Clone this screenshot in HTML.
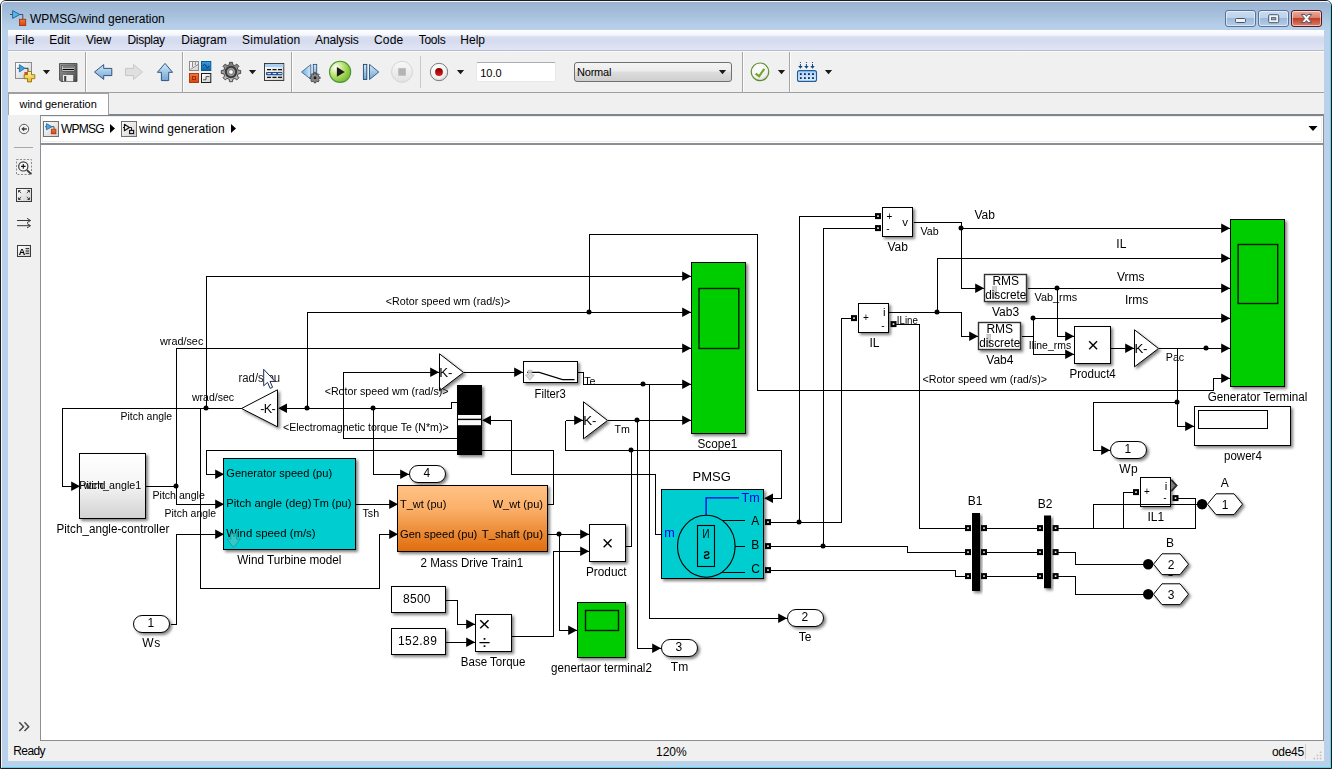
<!DOCTYPE html>
<html><head><meta charset="utf-8"><title>WPMSG/wind generation</title>
<style>
html,body{margin:0;padding:0}
body{width:1332px;height:769px;position:relative;overflow:hidden;background:#fff;font-family:"Liberation Sans",sans-serif;font-size:12px;color:#000}
.abs{position:absolute}
#frame{left:0;top:0;width:1330px;height:767px;border:1px solid #1c1c1c;border-radius:6px 6px 0 0;background:#b9d1ea;overflow:hidden}
#frame2{left:1px;top:1px;width:1328px;height:765px;border:1px solid;border-color:#f4f8fc #5ad4ec #5ad4ec #f4f8fc;border-radius:5px 5px 0 0}
#titlegrad{left:0;top:0;width:1332px;height:30px;background:linear-gradient(#98b2d0 0px,#a4bedb 12px,#b4cde8 24px,#b9d1ea 30px)}
#title{left:30px;top:10.5px;font-size:12px;line-height:16px;white-space:pre}
#menubar{left:8px;top:30px;width:1316px;height:21px;background:linear-gradient(#ffffff 0px,#f4f6fb 5px,#d9dff0 7px,#d5dbee 11px,#e1e6f6 20px);border-bottom:1px solid #b6bccc;box-sizing:border-box}
.mi{position:absolute;top:32px;line-height:16px;white-space:pre;font-size:12px}
#toolbar{left:8px;top:51px;width:1316px;height:42px;background:#f0f0f0;border-bottom:1px solid #a0a0a0;border-top:1px solid #fbfbfb;box-sizing:border-box}
.sep{position:absolute;width:1px;background:#a5a5a5;box-shadow:1px 0 0 #fdfdfd}
#tabrow{left:8px;top:93px;width:1316px;height:21px;background:#f0f0f0}
#tab{left:8px;top:93px;width:101px;height:22px;background:#fff;border:1px solid #a0a0a0;border-bottom:none;box-sizing:border-box}
#tabtxt{left:19.5px;top:97px;font-size:11px;line-height:14px;white-space:pre;letter-spacing:-0.03px}
#palette{left:8px;top:114px;width:33px;height:627px;background:#f0f0f0}
#bcbar{left:40px;top:114px;width:1284px;height:31px;background:#fff;border:1px solid #8a8e96;border-top:2px solid #7f838a;border-bottom:2px solid #8a8e96;box-sizing:border-box}
#canvas{left:40px;top:145px;width:1284px;height:596px;background:#fff;border-left:1px solid #8a8e96;border-right:1px solid #8a8e96;border-bottom:1px solid #8a8e96;box-sizing:border-box}
#status{left:8px;top:741px;width:1316px;height:20px;background:#f0f0f0}
.st{position:absolute;top:744.6px;line-height:14px;font-size:12px;white-space:pre}
svg{position:absolute;left:0;top:0}
svg text{font-family:"Liberation Sans",sans-serif;white-space:pre}
</style></head>
<body>
<div id="frame" class="abs"><div id="titlegrad" class="abs"></div></div><div id="frame2" class="abs"></div>
<div id="title" class="abs">WPMSG/wind generation</div>
<div id="menubar" class="abs"></div>
<div class="mi" style="left:15px;letter-spacing:0px">File</div>
<div class="mi" style="left:49.3px;letter-spacing:0px">Edit</div>
<div class="mi" style="left:86px;letter-spacing:-0.2px">View</div>
<div class="mi" style="left:127.5px;letter-spacing:-0.3px">Display</div>
<div class="mi" style="left:181.3px;letter-spacing:0px">Diagram</div>
<div class="mi" style="left:242px;letter-spacing:0.25px">Simulation</div>
<div class="mi" style="left:315px;letter-spacing:-0.12px">Analysis</div>
<div class="mi" style="left:374px;letter-spacing:0.2px">Code</div>
<div class="mi" style="left:418.7px;letter-spacing:-0.25px">Tools</div>
<div class="mi" style="left:460.3px;letter-spacing:0px">Help</div>
<div id="toolbar" class="abs"></div>
<div class="sep" style="left:85px;top:52px;height:40px"></div>
<div class="sep" style="left:182px;top:52px;height:40px"></div>
<div class="sep" style="left:291px;top:52px;height:40px"></div>
<div class="sep" style="left:742px;top:52px;height:40px"></div>
<div class="sep" style="left:789px;top:52px;height:40px"></div>
<div class="sep" style="left:420px;top:56px;height:32px;box-shadow:none;background:#c8c8c8"></div>
<div id="tabrow" class="abs"></div>
<div id="palette" class="abs"></div>
<div id="bcbar" class="abs"></div><div class="abs" style="left:42px;top:116px;width:1280px;height:26px;border:1px solid #ececec;box-sizing:border-box"></div>
<div id="canvas" class="abs"></div>
<div id="tab" class="abs"></div><div id="tabtxt" class="abs">wind generation</div>
<div id="status" class="abs"></div>
<div class="st" style="left:13.3px;top:743.6px;letter-spacing:-0.6px">Ready</div>
<div class="st" style="left:656px">120%</div>
<div class="st" style="left:1272px;letter-spacing:-0.3px">ode45</div>
<div class="abs" style="left:1305px;top:744px;width:1px;height:15px;background:#d0d0d0"></div>
<div class="abs" style="left:476px;top:62px;width:80px;height:20px;box-sizing:border-box;border:1px solid #e3e9ef;border-top-color:#abadb3;border-radius:2px;background:#fff"></div>
<div class="abs" style="left:480.2px;top:65.5px;font-size:11px;line-height:14px">10.0</div>
<div class="abs" style="left:574px;top:62px;width:158px;height:20px;box-sizing:border-box;border:1px solid #707070;border-radius:3px;background:linear-gradient(#f4f4f4 0,#ececec 45%,#dddddd 50%,#cfcfcf 100%)"></div>
<div class="abs" style="left:577px;top:64.8px;font-size:11px;line-height:14px;letter-spacing:-0.2px">Normal</div>
<div class="abs" style="left:43px;top:121px;"></div>
<div class="abs" style="left:61px;top:121.4px;font-size:12px;line-height:16px;white-space:pre;letter-spacing:-0.75px">WPMSG</div>
<div class="abs" style="left:139px;top:121.4px;font-size:12px;line-height:16px;white-space:pre;letter-spacing:0.07px">wind generation</div>
<svg width="1332" height="769" viewBox="0 0 1332 769" style="will-change:transform">
<defs><filter id="sh" x="-20%" y="-20%" width="150%" height="150%"><feGaussianBlur in="SourceAlpha" stdDeviation="1.5"/><feOffset dx="2" dy="2"/><feComponentTransfer><feFuncA type="linear" slope="0.5"/></feComponentTransfer><feMerge><feMergeNode/><feMergeNode in="SourceGraphic"/></feMerge></filter><linearGradient id="gGrey" x1="0" y1="0" x2="0" y2="1"><stop offset="0" stop-color="#ffffff"/><stop offset="0.45" stop-color="#f6f6f6"/><stop offset="1" stop-color="#d2d2d2"/></linearGradient><linearGradient id="gOr" x1="0" y1="0" x2="0" y2="1"><stop offset="0" stop-color="#ffc285"/><stop offset="0.35" stop-color="#fbb06a"/><stop offset="1" stop-color="#df6c0c"/></linearGradient></defs>
<path d="M241.5,408.5 L62.5,408.5 L62.5,486.5 L80.5,486.5" fill="none" stroke="#000" stroke-width="1" shape-rendering="crispEdges"/>
<path d="M80.1,486.2 L71.19999999999999,481.5 L71.19999999999999,490.9Z" fill="#000"/>
<path d="M206.5,408.5 L206.5,276.5 L691.5,276.5" fill="none" stroke="#000" stroke-width="1" shape-rendering="crispEdges"/>
<path d="M691.1,276.2 L682.2,271.5 L682.2,280.9Z" fill="#000"/>
<path d="M200.5,408.5 L200.5,588.5 L379.5,588.5 L379.5,534.5 L398.5,534.5" fill="none" stroke="#000" stroke-width="1" shape-rendering="crispEdges"/>
<path d="M398.1,534.2 L389.20000000000005,529.5 L389.20000000000005,538.9000000000001Z" fill="#000"/>
<path d="M547.5,504.5 L553.5,504.5 L553.5,450.5 L206.5,450.5 L206.5,474.5 L224.5,474.5" fill="none" stroke="#000" stroke-width="1" shape-rendering="crispEdges"/>
<path d="M224.1,474.2 L215.2,469.5 L215.2,478.9Z" fill="#000"/>
<path d="M145.5,486.5 L176.5,486.5" fill="none" stroke="#000" stroke-width="1" shape-rendering="crispEdges"/>
<path d="M176.5,486.5 L176.5,348.5 L691.5,348.5" fill="none" stroke="#000" stroke-width="1" shape-rendering="crispEdges"/>
<path d="M691.1,348.2 L682.2,343.5 L682.2,352.9Z" fill="#000"/>
<path d="M176.5,486.5 L176.5,504.5 L224.5,504.5" fill="none" stroke="#000" stroke-width="1" shape-rendering="crispEdges"/>
<path d="M224.1,504.2 L215.2,499.5 L215.2,508.9Z" fill="#000"/>
<path d="M170.5,624.5 L176.5,624.5 L176.5,534.5 L224.5,534.5" fill="none" stroke="#000" stroke-width="1" shape-rendering="crispEdges"/>
<path d="M224.1,534.2 L215.2,529.5 L215.2,538.9000000000001Z" fill="#000"/>
<path d="M355.5,504.5 L398.5,504.5" fill="none" stroke="#000" stroke-width="1" shape-rendering="crispEdges"/>
<path d="M398.1,504.2 L389.20000000000005,499.5 L389.20000000000005,508.9Z" fill="#000"/>
<path d="M457.5,402.5 L451.5,402.5 L451.5,408.5 L278.5,408.5" fill="none" stroke="#000" stroke-width="1" shape-rendering="crispEdges"/>
<path d="M278.1,408.2 L287.0,403.5 L287.0,412.9Z" fill="#000"/>
<path d="M307.5,408.5 L307.5,312.5 L691.5,312.5" fill="none" stroke="#000" stroke-width="1" shape-rendering="crispEdges"/>
<path d="M691.1,312.2 L682.2,307.5 L682.2,316.9Z" fill="#000"/>
<path d="M589.5,312.5 L589.5,234.5 L757.5,234.5 L757.5,390.5 L1213.5,390.5 L1213.5,378.5 L1230.5,378.5" fill="none" stroke="#000" stroke-width="1" shape-rendering="crispEdges"/>
<path d="M1230.1,378.2 L1221.1999999999998,373.5 L1221.1999999999998,382.9Z" fill="#000"/>
<path d="M373.5,408.5 L373.5,474.5 L409.5,474.5" fill="none" stroke="#000" stroke-width="1" shape-rendering="crispEdges"/>
<path d="M409.1,474.2 L400.20000000000005,469.5 L400.20000000000005,478.9Z" fill="#000"/>
<path d="M457.5,438.5 L343.5,438.5 L343.5,372.5 L439.5,372.5" fill="none" stroke="#000" stroke-width="1" shape-rendering="crispEdges"/>
<path d="M439.1,372.2 L430.20000000000005,367.5 L430.20000000000005,376.9Z" fill="#000"/>
<path d="M463.5,372.5 L523.5,372.5" fill="none" stroke="#000" stroke-width="1" shape-rendering="crispEdges"/>
<path d="M523.1,372.2 L514.2,367.5 L514.2,376.9Z" fill="#000"/>
<path d="M577.5,372.5 L583.5,372.5 L583.5,384.5 L691.5,384.5" fill="none" stroke="#000" stroke-width="1" shape-rendering="crispEdges"/>
<path d="M691.1,384.2 L682.2,379.5 L682.2,388.9Z" fill="#000"/>
<path d="M649.5,384.5 L649.5,618.5 L787.5,618.5" fill="none" stroke="#000" stroke-width="1" shape-rendering="crispEdges"/>
<path d="M787.1,618.2 L778.2,613.5 L778.2,622.9000000000001Z" fill="#000"/>
<path d="M661.5,534.5 L655.5,534.5 L655.5,474.5 L511.5,474.5 L511.5,420.5 L482.5,420.5" fill="none" stroke="#000" stroke-width="1" shape-rendering="crispEdges"/>
<path d="M482.1,420.2 L491.0,415.5 L491.0,424.9Z" fill="#000"/>
<path d="M625.5,546.5 L631.5,546.5 L631.5,450.5" fill="none" stroke="#000" stroke-width="1" shape-rendering="crispEdges"/>
<path d="M565.5,420.5 L565.5,450.5 L781.5,450.5 L781.5,498.5 L764.5,498.5" fill="none" stroke="#000" stroke-width="1" shape-rendering="crispEdges"/>
<path d="M764.1,498.2 L773.0,493.5 L773.0,502.9Z" fill="#000"/>
<path d="M565.5,420.5 L583.5,420.5" fill="none" stroke="#000" stroke-width="1" shape-rendering="crispEdges"/>
<path d="M583.1,420.2 L574.2,415.5 L574.2,424.9Z" fill="#000"/>
<path d="M607.5,420.5 L691.5,420.5" fill="none" stroke="#000" stroke-width="1" shape-rendering="crispEdges"/>
<path d="M691.1,420.2 L682.2,415.5 L682.2,424.9Z" fill="#000"/>
<path d="M637.5,420.5 L637.5,648.5 L661.5,648.5" fill="none" stroke="#000" stroke-width="1" shape-rendering="crispEdges"/>
<path d="M661.1,648.2 L652.2,643.5 L652.2,652.9000000000001Z" fill="#000"/>
<path d="M547.5,534.5 L589.5,534.5" fill="none" stroke="#000" stroke-width="1" shape-rendering="crispEdges"/>
<path d="M589.1,534.2 L580.2,529.5 L580.2,538.9000000000001Z" fill="#000"/>
<path d="M559.5,534.5 L559.5,630.5 L577.5,630.5" fill="none" stroke="#000" stroke-width="1" shape-rendering="crispEdges"/>
<path d="M577.1,630.2 L568.2,625.5 L568.2,634.9000000000001Z" fill="#000"/>
<path d="M511.5,636.5 L553.5,636.5 L553.5,551.5 L589.5,551.5" fill="none" stroke="#000" stroke-width="1" shape-rendering="crispEdges"/>
<path d="M589.1,551.2 L580.2,546.5 L580.2,555.9000000000001Z" fill="#000"/>
<path d="M445.5,600.5 L457.5,600.5 L457.5,624.5 L475.5,624.5" fill="none" stroke="#000" stroke-width="1" shape-rendering="crispEdges"/>
<path d="M475.1,624.2 L466.20000000000005,619.5 L466.20000000000005,628.9000000000001Z" fill="#000"/>
<path d="M445.5,642.5 L475.5,642.5" fill="none" stroke="#000" stroke-width="1" shape-rendering="crispEdges"/>
<path d="M475.1,642.2 L466.20000000000005,637.5 L466.20000000000005,646.9000000000001Z" fill="#000"/>
<path d="M769.5,522.5 L841.5,522.5 L841.5,318.5 L851.5,318.5" fill="none" stroke="#000" stroke-width="1" shape-rendering="crispEdges"/>
<path d="M799.5,522.5 L799.5,216.5 L876.5,216.5" fill="none" stroke="#000" stroke-width="1" shape-rendering="crispEdges"/>
<path d="M769.5,546.5 L907.5,546.5 L907.5,552.5 L965.5,552.5" fill="none" stroke="#000" stroke-width="1" shape-rendering="crispEdges"/>
<path d="M823.5,546.5 L823.5,228.5 L876.5,228.5" fill="none" stroke="#000" stroke-width="1" shape-rendering="crispEdges"/>
<path d="M769.5,570.5 L955.5,570.5 L955.5,576.5 L965.5,576.5" fill="none" stroke="#000" stroke-width="1" shape-rendering="crispEdges"/>
<path d="M895.5,324.5 L919.5,324.5 L919.5,528.5 L965.5,528.5" fill="none" stroke="#000" stroke-width="1" shape-rendering="crispEdges"/>
<path d="M888.5,312.5 L961.5,312.5 L961.5,336.5 L978.5,336.5" fill="none" stroke="#000" stroke-width="1" shape-rendering="crispEdges"/>
<path d="M978.1,336.2 L969.2,331.5 L969.2,340.9Z" fill="#000"/>
<path d="M937.5,312.5 L937.5,258.5 L1230.5,258.5" fill="none" stroke="#000" stroke-width="1" shape-rendering="crispEdges"/>
<path d="M1230.1,258.2 L1221.1999999999998,253.5 L1221.1999999999998,262.9Z" fill="#000"/>
<path d="M913.5,222.5 L961.5,222.5 L961.5,288.5 L984.5,288.5" fill="none" stroke="#000" stroke-width="1" shape-rendering="crispEdges"/>
<path d="M984.1,288.2 L975.2,283.5 L975.2,292.9Z" fill="#000"/>
<path d="M961.5,228.5 L1230.5,228.5" fill="none" stroke="#000" stroke-width="1" shape-rendering="crispEdges"/>
<path d="M1230.1,228.2 L1221.1999999999998,223.5 L1221.1999999999998,232.89999999999998Z" fill="#000"/>
<path d="M1027.5,288.5 L1230.5,288.5" fill="none" stroke="#000" stroke-width="1" shape-rendering="crispEdges"/>
<path d="M1230.1,288.2 L1221.1999999999998,283.5 L1221.1999999999998,292.9Z" fill="#000"/>
<path d="M1057.5,288.5 L1057.5,336.5 L1074.5,336.5" fill="none" stroke="#000" stroke-width="1" shape-rendering="crispEdges"/>
<path d="M1074.1,336.2 L1065.1999999999998,331.5 L1065.1999999999998,340.9Z" fill="#000"/>
<path d="M1021.5,336.5 L1033.5,336.5" fill="none" stroke="#000" stroke-width="1" shape-rendering="crispEdges"/>
<path d="M1033.5,354.5 L1033.5,318.5 L1230.5,318.5" fill="none" stroke="#000" stroke-width="1" shape-rendering="crispEdges"/>
<path d="M1230.1,318.2 L1221.1999999999998,313.5 L1221.1999999999998,322.9Z" fill="#000"/>
<path d="M1033.5,336.5 L1033.5,354.5 L1074.5,354.5" fill="none" stroke="#000" stroke-width="1" shape-rendering="crispEdges"/>
<path d="M1074.1,354.2 L1065.1999999999998,349.5 L1065.1999999999998,358.9Z" fill="#000"/>
<path d="M1110.5,348.5 L1134.5,348.5" fill="none" stroke="#000" stroke-width="1" shape-rendering="crispEdges"/>
<path d="M1134.1,348.2 L1125.1999999999998,343.5 L1125.1999999999998,352.9Z" fill="#000"/>
<path d="M1158.5,348.5 L1230.5,348.5" fill="none" stroke="#000" stroke-width="1" shape-rendering="crispEdges"/>
<path d="M1230.1,348.2 L1221.1999999999998,343.5 L1221.1999999999998,352.9Z" fill="#000"/>
<path d="M1177.5,348.5 L1177.5,426.5 L1194.5,426.5" fill="none" stroke="#000" stroke-width="1" shape-rendering="crispEdges"/>
<path d="M1194.1,426.2 L1185.1999999999998,421.5 L1185.1999999999998,430.9Z" fill="#000"/>
<path d="M1177.5,402.5 L1093.5,402.5 L1093.5,450.5 L1110.5,450.5" fill="none" stroke="#000" stroke-width="1" shape-rendering="crispEdges"/>
<path d="M1110.1,450.2 L1101.1999999999998,445.5 L1101.1999999999998,454.9Z" fill="#000"/>
<path d="M985.5,528.5 L1037.5,528.5" fill="none" stroke="#000" stroke-width="1" shape-rendering="crispEdges"/>
<path d="M985.5,552.5 L1037.5,552.5" fill="none" stroke="#000" stroke-width="1" shape-rendering="crispEdges"/>
<path d="M985.5,576.5 L1037.5,576.5" fill="none" stroke="#000" stroke-width="1" shape-rendering="crispEdges"/>
<path d="M1057.5,528.5 L1195.5,528.5 L1195.5,498.5 L1177.5,498.5" fill="none" stroke="#000" stroke-width="1" shape-rendering="crispEdges"/>
<path d="M1123.5,528.5 L1123.5,492.5 L1133.5,492.5" fill="none" stroke="#000" stroke-width="1" shape-rendering="crispEdges"/>
<path d="M1093.5,528.5 L1093.5,504.5 L1197.5,504.5" fill="none" stroke="#000" stroke-width="1" shape-rendering="crispEdges"/>
<path d="M1057.5,552.5 L1075.5,552.5 L1075.5,564.5 L1148.5,564.5" fill="none" stroke="#000" stroke-width="1" shape-rendering="crispEdges"/>
<path d="M1057.5,576.5 L1075.5,576.5 L1075.5,594.5 L1148.5,594.5" fill="none" stroke="#000" stroke-width="1" shape-rendering="crispEdges"/>
<circle cx="206" cy="408.1" r="2.5" fill="#000"/>
<circle cx="307" cy="408.1" r="2.5" fill="#000"/>
<circle cx="373" cy="408.1" r="2.5" fill="#000"/>
<circle cx="176" cy="486.1" r="2.5" fill="#000"/>
<circle cx="589" cy="312.1" r="2.5" fill="#000"/>
<circle cx="643" cy="384.1" r="2.5" fill="#000"/>
<circle cx="637" cy="420.1" r="2.5" fill="#000"/>
<circle cx="631" cy="450.1" r="2.5" fill="#000"/>
<circle cx="559" cy="534.1" r="2.5" fill="#000"/>
<circle cx="799" cy="522.1" r="2.5" fill="#000"/>
<circle cx="823" cy="546.1" r="2.5" fill="#000"/>
<circle cx="937" cy="312.1" r="2.5" fill="#000"/>
<circle cx="961" cy="228.1" r="2.5" fill="#000"/>
<circle cx="1057" cy="288.1" r="2.5" fill="#000"/>
<circle cx="1033" cy="318.1" r="2.5" fill="#000"/>
<circle cx="1206" cy="348.1" r="2.5" fill="#000"/>
<circle cx="1177" cy="402.1" r="2.5" fill="#000"/>
<rect x="79.5" y="453.5" width="66" height="65" fill="url(#gGrey)" stroke="#000" stroke-width="1" filter="url(#sh)"/>
<rect x="223.5" y="458.5" width="132" height="91" fill="#00cdcf" stroke="#000" stroke-width="1" filter="url(#sh)"/>
<path d="M277.5,389.8 L241.5,408.5 L277.5,426.8Z" fill="#fff" stroke="#000" stroke-width="1" filter="url(#sh)"/>
<rect x="457.5" y="385.5" width="24" height="69" fill="#000" stroke="#000" stroke-width="1" filter="url(#sh)"/>
<rect x="458" y="415" width="23" height="10.2" fill="#fafafa"/><rect x="458" y="418.7" width="23" height="1.4" fill="#000"/>
<rect x="409.5" y="465.5" width="36" height="17" rx="8.5" ry="8.5" fill="#fff" stroke="#000" stroke-width="1" filter="url(#sh)"/>
<text x="426.8" y="477.1" font-size="12" text-anchor="middle" fill="#000">4</text>
<rect x="397.5" y="485.5" width="150" height="66" fill="url(#gOr)" stroke="#000" stroke-width="1" filter="url(#sh)"/>
<path d="M439.5,353.8 L463.5,372.5 L439.5,390.8Z" fill="#fff" stroke="#000" stroke-width="1" filter="url(#sh)"/>
<rect x="523.5" y="361.5" width="54" height="21" fill="#fff" stroke="#000" stroke-width="1" filter="url(#sh)"/>
<path d="M527,372.4 H539.3 L562.5,379.6 H574.5" fill="none" stroke="#000" stroke-width="1.1"/>
<path d="M528,370.3 h3.8 v4.6 h2.5 l-4.4,5.4 l-4.4,-5.4 h2.5z" fill="#d2d2d2" fill-opacity="0.85" stroke="#b0b0b0" stroke-width="0.7"/>
<path d="M583.5,401.8 L607.5,420.5 L583.5,438.8Z" fill="#fff" stroke="#000" stroke-width="1" filter="url(#sh)"/>
<rect x="691.5" y="262.5" width="54" height="171" fill="#00cd00" stroke="#000" stroke-width="1" filter="url(#sh)"/>
<rect x="699.0" y="288.5" width="39.799999999999955" height="60" fill="none" stroke="#001800" stroke-width="1.4"/>
<rect x="589.5" y="524.5" width="36" height="37" fill="#fff" stroke="#000" stroke-width="1" filter="url(#sh)"/>
<rect x="391.5" y="586.5" width="54" height="26" fill="#fff" stroke="#000" stroke-width="1" filter="url(#sh)"/>
<rect x="391.5" y="628.5" width="54" height="26" fill="#fff" stroke="#000" stroke-width="1" filter="url(#sh)"/>
<rect x="475.5" y="614.5" width="36" height="37" fill="#fff" stroke="#000" stroke-width="1" filter="url(#sh)"/>
<rect x="577.5" y="602.5" width="48" height="55" fill="#00cd00" stroke="#000" stroke-width="1" filter="url(#sh)"/>
<rect x="585.5" y="610.5" width="33" height="20" fill="none" stroke="#001800" stroke-width="1.4"/>
<rect x="661.5" y="639.5" width="36" height="17" rx="8.5" ry="8.5" fill="#fff" stroke="#000" stroke-width="1" filter="url(#sh)"/>
<text x="678.8" y="651.1" font-size="12" text-anchor="middle" fill="#000">3</text>
<rect x="787.5" y="609.5" width="36" height="17" rx="8.5" ry="8.5" fill="#fff" stroke="#000" stroke-width="1" filter="url(#sh)"/>
<text x="804.8" y="621.1" font-size="12" text-anchor="middle" fill="#000">2</text>
<rect x="133.5" y="615.5" width="36" height="17" rx="8.5" ry="8.5" fill="#fff" stroke="#000" stroke-width="1" filter="url(#sh)"/>
<text x="150.8" y="627.1" font-size="12" text-anchor="middle" fill="#000">1</text>
<rect x="1110.5" y="441.5" width="36" height="17" rx="8.5" ry="8.5" fill="#fff" stroke="#000" stroke-width="1" filter="url(#sh)"/>
<text x="1127.8" y="453.1" font-size="12" text-anchor="middle" fill="#000">1</text>
<rect x="661.5" y="489.5" width="102" height="89" fill="#00cdcf" stroke="#000" stroke-width="1" filter="url(#sh)"/>
<path d="M706.1,515 V497.9 H739" fill="none" stroke="#0000e0" stroke-width="1.3"/>
<ellipse cx="706.3" cy="546.2" rx="28.8" ry="31" fill="none" stroke="#000" stroke-width="1.1"/>
<rect x="697.5" y="525.5" width="17" height="41" fill="none" stroke="#000" stroke-width="1.1"/>
<path d="M722.5,520.5 H745 M735,546.5 H745 M722.5,572.5 H745" fill="none" stroke="#000" stroke-width="1.1"/>
<text transform="translate(709.4,538) scale(-0.78,1)" font-size="12.6" fill="#000">N</text>
<text transform="translate(710,559.4) scale(-0.9,1)" font-size="11" font-weight="bold" fill="#000">S</text>
<rect x="765" y="519.1" width="6" height="6" fill="#000"/><rect x="767.2" y="521.3" width="1.6" height="1.6" fill="#fff"/>
<rect x="765" y="543.1" width="6" height="6" fill="#000"/><rect x="767.2" y="545.3" width="1.6" height="1.6" fill="#fff"/>
<rect x="765" y="567.1" width="6" height="6" fill="#000"/><rect x="767.2" y="569.3" width="1.6" height="1.6" fill="#fff"/>
<rect x="882.5" y="207.5" width="30" height="29" fill="#fff" stroke="#000" stroke-width="1" filter="url(#sh)"/>
<rect x="875" y="213.1" width="6" height="6" fill="#000"/><rect x="877.2" y="215.3" width="1.6" height="1.6" fill="#fff"/>
<rect x="875" y="225.1" width="6" height="6" fill="#000"/><rect x="877.2" y="227.3" width="1.6" height="1.6" fill="#fff"/>
<rect x="858.5" y="303.5" width="30" height="29" fill="#fff" stroke="#000" stroke-width="1" filter="url(#sh)"/>
<rect x="851" y="315.1" width="6" height="6" fill="#000"/><rect x="853.2" y="317.3" width="1.6" height="1.6" fill="#fff"/>
<rect x="890.5" y="321.1" width="6" height="6" fill="#000"/><rect x="892.7" y="323.3" width="1.6" height="1.6" fill="#fff"/>
<rect x="1140.5" y="477.5" width="30" height="29" fill="#fff" stroke="#000" stroke-width="1" filter="url(#sh)"/>
<rect x="1133" y="489.1" width="6" height="6" fill="#000"/><rect x="1135.2" y="491.3" width="1.6" height="1.6" fill="#fff"/>
<rect x="1172.5" y="495.1" width="6" height="6" fill="#000"/><rect x="1174.7" y="497.3" width="1.6" height="1.6" fill="#fff"/>
<path d="M1171.3,479.8 L1176.6,485.5 L1171.3,491.2" fill="#777" stroke="#2a2a2a" stroke-width="1.8"/>
<rect x="984.5" y="274.5" width="42" height="27" fill="#fff" stroke="#333" stroke-width="1.4" filter="url(#sh)"/>
<rect x="978.5" y="322.5" width="42" height="27" fill="#fff" stroke="#333" stroke-width="1.4" filter="url(#sh)"/>
<rect x="992.7" y="286.5" width="3.8" height="11.5" fill="#d0d0d0" stroke="#b0b0b0" stroke-width="0.6"/>
<rect x="986.9" y="334.5" width="3.8" height="12.5" fill="#d0d0d0" stroke="#b0b0b0" stroke-width="0.6"/>
<rect x="1074.5" y="326.5" width="36" height="37" fill="#fff" stroke="#000" stroke-width="1" filter="url(#sh)"/>
<path d="M1134.5,329.8 L1158.5,348.5 L1134.5,366.8Z" fill="#fff" stroke="#000" stroke-width="1" filter="url(#sh)"/>
<rect x="1230.5" y="219.5" width="54" height="167" fill="#00cd00" stroke="#000" stroke-width="1" filter="url(#sh)"/>
<rect x="1238.1" y="244.5" width="39.600000000000136" height="59" fill="none" stroke="#001800" stroke-width="1.4"/>
<rect x="1194.5" y="406.5" width="96" height="39" fill="#fff" stroke="#000" stroke-width="1" filter="url(#sh)"/>
<rect x="1198.5" y="410.5" width="69" height="18" fill="#fff" stroke="#000" stroke-width="1"/>
<rect x="972" y="513" width="8" height="78" fill="#000" filter="url(#sh)"/>
<rect x="1044" y="515.5" width="7" height="72.7" fill="#000" filter="url(#sh)"/>
<rect x="965" y="525.1" width="6" height="6" fill="#000"/><rect x="967.2" y="527.3" width="1.6" height="1.6" fill="#fff"/>
<rect x="981" y="525.1" width="6" height="6" fill="#000"/><rect x="983.2" y="527.3" width="1.6" height="1.6" fill="#fff"/>
<rect x="1037" y="525.1" width="6" height="6" fill="#000"/><rect x="1039.2" y="527.3" width="1.6" height="1.6" fill="#fff"/>
<rect x="1052.6" y="525.1" width="6" height="6" fill="#000"/><rect x="1054.8" y="527.3" width="1.6" height="1.6" fill="#fff"/>
<rect x="965" y="549.1" width="6" height="6" fill="#000"/><rect x="967.2" y="551.3" width="1.6" height="1.6" fill="#fff"/>
<rect x="981" y="549.1" width="6" height="6" fill="#000"/><rect x="983.2" y="551.3" width="1.6" height="1.6" fill="#fff"/>
<rect x="1037" y="549.1" width="6" height="6" fill="#000"/><rect x="1039.2" y="551.3" width="1.6" height="1.6" fill="#fff"/>
<rect x="1052.6" y="549.1" width="6" height="6" fill="#000"/><rect x="1054.8" y="551.3" width="1.6" height="1.6" fill="#fff"/>
<rect x="965" y="573.1" width="6" height="6" fill="#000"/><rect x="967.2" y="575.3" width="1.6" height="1.6" fill="#fff"/>
<rect x="981" y="573.1" width="6" height="6" fill="#000"/><rect x="983.2" y="575.3" width="1.6" height="1.6" fill="#fff"/>
<rect x="1037" y="573.1" width="6" height="6" fill="#000"/><rect x="1039.2" y="575.3" width="1.6" height="1.6" fill="#fff"/>
<rect x="1052.6" y="573.1" width="6" height="6" fill="#000"/><rect x="1054.8" y="575.3" width="1.6" height="1.6" fill="#fff"/>
<path d="M1140,504.5 H1171" stroke="#000" stroke-width="1" shape-rendering="crispEdges"/>
<circle cx="1202.1" cy="504.2" r="5.2" fill="#000"/>
<path d="M1207.5,504.2 L1216,493.8 H1234 L1242.5,504.2 L1234,514.6 H1216Z" fill="#fff" stroke="#000" stroke-width="1" filter="url(#sh)"/>
<text x="1225.0" y="508.7" font-size="12" text-anchor="middle" fill="#000">1</text>
<text x="1166" y="576.3" font-size="12" text-anchor="start" fill="#000">C</text>
<circle cx="1148.2" cy="564.3" r="5.2" fill="#000"/>
<path d="M1153.5,564.2 L1162,553.8000000000001 H1180 L1188.5,564.2 L1180,574.6 H1162Z" fill="#fff" stroke="#000" stroke-width="1" filter="url(#sh)"/>
<text x="1171.0" y="568.7" font-size="12" text-anchor="middle" fill="#000">2</text>
<circle cx="1148.2" cy="594.3" r="5.2" fill="#000"/>
<path d="M1153.5,594.2 L1162,583.8000000000001 H1180 L1188.5,594.2 L1180,604.6 H1162Z" fill="#fff" stroke="#000" stroke-width="1" filter="url(#sh)"/>
<text x="1171.0" y="598.7" font-size="12" text-anchor="middle" fill="#000">3</text>
<text x="160" y="345" font-size="10.67" text-anchor="start" fill="#000" textLength="43.3" lengthAdjust="spacingAndGlyphs">wrad/sec</text>
<text x="192" y="400.5" font-size="10.67" text-anchor="start" fill="#000" textLength="42.1" lengthAdjust="spacingAndGlyphs">wrad/sec</text>
<text x="238.5" y="382" font-size="12" text-anchor="start" fill="#151515" textLength="41.7" lengthAdjust="spacingAndGlyphs">rad/s-pu</text>
<text x="120.5" y="420" font-size="10.67" text-anchor="start" fill="#000" textLength="51.6" lengthAdjust="spacingAndGlyphs">Pitch angle</text>
<text x="152.5" y="499.3" font-size="10.67" text-anchor="start" fill="#000" textLength="52.3" lengthAdjust="spacingAndGlyphs">Pitch angle</text>
<text x="164.5" y="517" font-size="10.67" text-anchor="start" fill="#000" textLength="51.6" lengthAdjust="spacingAndGlyphs">Pitch angle</text>
<text x="56.5" y="532.5" font-size="12" text-anchor="start" fill="#000" textLength="112.8" lengthAdjust="spacingAndGlyphs">Pitch_angle-controller</text>
<text x="83.6" y="488.8" font-size="10.67" text-anchor="start" fill="#000">wind</text>
<text x="79.3" y="488.8" font-size="10.67" text-anchor="start" fill="#000" textLength="61.9" lengthAdjust="spacingAndGlyphs">Pitch_angle1</text>
<text x="226.3" y="476.8" font-size="10.67" text-anchor="start" fill="#000" textLength="105.8" lengthAdjust="spacingAndGlyphs">Generator speed (pu)</text>
<text x="226.3" y="506.8" font-size="10.67" text-anchor="start" fill="#000" textLength="85.3" lengthAdjust="spacingAndGlyphs">Pitch angle (deg)</text>
<text x="351.3" y="506.8" font-size="10.67" text-anchor="end" fill="#000" textLength="38.3" lengthAdjust="spacingAndGlyphs">Tm (pu)</text>
<text x="226.3" y="536.8" font-size="10.67" text-anchor="start" fill="#000" textLength="89.3" lengthAdjust="spacingAndGlyphs">Wind speed (m/s)</text>
<text x="237.3" y="564" font-size="12" text-anchor="start" fill="#000" textLength="104.1" lengthAdjust="spacingAndGlyphs">Wind Turbine model</text>
<text x="362.5" y="517" font-size="10.67" text-anchor="start" fill="#000">Tsh</text>
<text x="385.8" y="305" font-size="10.67" text-anchor="start" fill="#000" textLength="124.5" lengthAdjust="spacingAndGlyphs">&lt;Rotor speed wm (rad/s)&gt;</text>
<text x="324.7" y="394.7" font-size="10.67" text-anchor="start" fill="#000" textLength="123.9" lengthAdjust="spacingAndGlyphs">&lt;Rotor speed wm (rad/s)&gt;</text>
<text x="283" y="430.5" font-size="10.67" text-anchor="start" fill="#000" textLength="165.6" lengthAdjust="spacingAndGlyphs">&lt;Electromagnetic torque Te (N*m)&gt;</text>
<text x="922.5" y="382.5" font-size="10.67" text-anchor="start" fill="#000" textLength="124.5" lengthAdjust="spacingAndGlyphs">&lt;Rotor speed wm (rad/s)&gt;</text>
<text x="260.3" y="412.6" font-size="12.6" text-anchor="start" fill="#000" letter-spacing="-0.7">-K-</text>
<clipPath id="cg2"><rect x="439.6" y="354" width="25" height="36"/></clipPath>
<text x="435.2" y="376.8" font-size="13.3" text-anchor="start" fill="#000" letter-spacing="-0.3" clip-path="url(#cg2)">-K-</text>
<clipPath id="cg3"><rect x="583.6" y="402" width="25" height="36"/></clipPath>
<text x="579.2" y="424.8" font-size="13.3" text-anchor="start" fill="#000" letter-spacing="-0.3" clip-path="url(#cg3)">-K-</text>
<clipPath id="cg4"><rect x="1134.6" y="330" width="25" height="36"/></clipPath>
<text x="1130.3" y="352.8" font-size="13.3" text-anchor="start" fill="#000" letter-spacing="-0.3" clip-path="url(#cg4)">-K-</text>
<text x="400" y="507.5" font-size="10.67" text-anchor="start" fill="#000" textLength="46.3" lengthAdjust="spacingAndGlyphs">T_wt (pu)</text>
<text x="543" y="507.5" font-size="10.67" text-anchor="end" fill="#000" textLength="50.3" lengthAdjust="spacingAndGlyphs">W_wt (pu)</text>
<text x="400" y="538" font-size="10.67" text-anchor="start" fill="#000" textLength="77.3" lengthAdjust="spacingAndGlyphs">Gen speed (pu)</text>
<text x="543" y="538" font-size="10.67" text-anchor="end" fill="#000" textLength="61.3" lengthAdjust="spacingAndGlyphs">T_shaft (pu)</text>
<text x="420.5" y="566.8" font-size="12" text-anchor="start" fill="#000" textLength="102.8" lengthAdjust="spacingAndGlyphs">2 Mass Drive Train1</text>
<text x="534.5" y="398" font-size="12" text-anchor="start" fill="#000" textLength="31.3" lengthAdjust="spacingAndGlyphs">Filter3</text>
<text x="584.2" y="384.6" font-size="10.67" text-anchor="start" fill="#000">Te</text>
<text x="614.5" y="432.5" font-size="10.67" text-anchor="start" fill="#000">Tm</text>
<text x="697.5" y="447.5" font-size="12" text-anchor="start" fill="#000" textLength="39.8" lengthAdjust="spacingAndGlyphs">Scope1</text>
<text x="692.5" y="480.8" font-size="13" text-anchor="start" fill="#000">PMSG</text>
<text x="741.6" y="501.7" font-size="12.6" text-anchor="start" fill="#0000e8">Tm</text>
<text x="664.2" y="536.8" font-size="12.6" text-anchor="start" fill="#0000e8">m</text>
<text x="751.3" y="525" font-size="12" text-anchor="start" fill="#000">A</text>
<text x="751.3" y="549.3" font-size="12" text-anchor="start" fill="#000">B</text>
<text x="751.3" y="573" font-size="12" text-anchor="start" fill="#000">C</text>
<text x="586" y="575.8" font-size="12" text-anchor="start" fill="#000" textLength="40.6" lengthAdjust="spacingAndGlyphs">Product</text>
<text x="607.5" y="549.5" font-size="20" text-anchor="middle" fill="#000">×</text>
<text x="1093" y="352" font-size="20" text-anchor="middle" fill="#000">×</text>
<text x="403.1" y="602.5" font-size="12" text-anchor="start" fill="#000" letter-spacing="0.25">8500</text>
<text x="398" y="645" font-size="12" text-anchor="start" fill="#000" letter-spacing="0.42">152.89</text>
<text x="484.4" y="631" font-size="21" text-anchor="middle" fill="#000">×</text>
<text x="484.4" y="649" font-size="21" text-anchor="middle" fill="#000">÷</text>
<text x="460.8" y="665.8" font-size="12" text-anchor="start" fill="#000" textLength="64.6" lengthAdjust="spacingAndGlyphs">Base Torque</text>
<text x="551.1" y="672" font-size="12" text-anchor="start" fill="#000" textLength="100.8" lengthAdjust="spacingAndGlyphs">genertaor terminal2</text>
<text x="670.8" y="670.6" font-size="12" text-anchor="start" fill="#000">Tm</text>
<text x="798.8" y="640.5" font-size="12" text-anchor="start" fill="#000">Te</text>
<text x="142.2" y="646.8" font-size="12" text-anchor="start" fill="#000" letter-spacing="0.7">Ws</text>
<text x="1119.3" y="472.8" font-size="12" text-anchor="start" fill="#000" letter-spacing="0.5">Wp</text>
<text x="974.5" y="218.8" font-size="12" text-anchor="start" fill="#000">Vab</text>
<text x="920.5" y="235" font-size="10.67" text-anchor="start" fill="#000">Vab</text>
<text x="887.5" y="250.8" font-size="12" text-anchor="start" fill="#000">Vab</text>
<text x="869.5" y="346.8" font-size="12" text-anchor="start" fill="#000">IL</text>
<text x="896.8" y="324.3" font-size="10.67" text-anchor="start" fill="#000" textLength="21.1" lengthAdjust="spacingAndGlyphs">ILine</text>
<text x="1116.3" y="248" font-size="12" text-anchor="start" fill="#000">IL</text>
<text x="1117" y="280.5" font-size="12" text-anchor="start" fill="#000">Vrms</text>
<text x="1125" y="304.3" font-size="12" text-anchor="start" fill="#000">Irms</text>
<text x="1034.5" y="300.5" font-size="10.67" text-anchor="start" fill="#000" textLength="42.6" lengthAdjust="spacingAndGlyphs">Vab_rms</text>
<text x="1028.8" y="348.8" font-size="10.67" text-anchor="start" fill="#000" textLength="42.3" lengthAdjust="spacingAndGlyphs">Iline_rms</text>
<text x="992" y="315.5" font-size="12" text-anchor="start" fill="#000">Vab3</text>
<text x="986.3" y="363.8" font-size="12" text-anchor="start" fill="#000">Vab4</text>
<text x="1005.8" y="284.5" font-size="12" text-anchor="middle" fill="#000">RMS</text>
<text x="1005.8" y="298.8" font-size="12" text-anchor="middle" fill="#000" textLength="41.3" lengthAdjust="spacingAndGlyphs">discrete</text>
<text x="999.8" y="332.5" font-size="12" text-anchor="middle" fill="#000">RMS</text>
<text x="999.8" y="346.8" font-size="12" text-anchor="middle" fill="#000" textLength="41.3" lengthAdjust="spacingAndGlyphs">discrete</text>
<text x="1069.5" y="378" font-size="12" text-anchor="start" fill="#000" textLength="46.3" lengthAdjust="spacingAndGlyphs">Product4</text>
<text x="1165.8" y="360.5" font-size="10.67" text-anchor="start" fill="#000">Pac</text>
<text x="1207.8" y="400.8" font-size="12" text-anchor="start" fill="#000" textLength="99.6" lengthAdjust="spacingAndGlyphs">Generator Terminal</text>
<text x="1224" y="459.5" font-size="12" text-anchor="start" fill="#000" textLength="37.8" lengthAdjust="spacingAndGlyphs">power4</text>
<text x="967.8" y="505" font-size="12" text-anchor="start" fill="#000">B1</text>
<text x="1037.8" y="507.5" font-size="12" text-anchor="start" fill="#000">B2</text>
<text x="1220.8" y="487" font-size="12" text-anchor="start" fill="#000">A</text>
<text x="1166" y="547" font-size="12" text-anchor="start" fill="#000">B</text>
<text x="1147.5" y="520.8" font-size="12" text-anchor="start" fill="#000">IL1</text>
<text x="886.5" y="219.5" font-size="10" text-anchor="start" fill="#000">+</text>
<text x="886.3" y="232.2" font-size="10" text-anchor="start" fill="#000">-</text>
<text x="902.3" y="226" font-size="11.5" text-anchor="start" fill="#000">v</text>
<text x="863" y="321" font-size="10" text-anchor="start" fill="#000">+</text>
<text x="883" y="316.3" font-size="11.5" text-anchor="start" fill="#000">i</text>
<text x="881.3" y="328.5" font-size="10" text-anchor="start" fill="#000">-</text>
<text x="1144" y="495" font-size="10" text-anchor="start" fill="#000">+</text>
<text x="1164.8" y="489.5" font-size="11.5" text-anchor="start" fill="#000">i</text>
<text x="1163.3" y="501.3" font-size="10" text-anchor="start" fill="#000">-</text>
<path d="M230.8,533.5 h5.6 v5.6 h3.8 l-6.6,8.4 l-6.6,-8.4 h3.8z" fill="#46c4c4" fill-opacity="0.75" stroke="#168c8c" stroke-opacity="0.8" stroke-width="0.8"/>
<path d="M263.7,369.3 V385.8 L267.5,382.4 L270.2,388.4 L272.6,387.3 L270,381.4 H275Z" fill="#fff" stroke="#1b2a5a" stroke-width="1" stroke-linejoin="round"/>
<defs><linearGradient id="gBlue" x1="0" y1="0" x2="0" y2="1"><stop offset="0" stop-color="#d4e9f9"/><stop offset="1" stop-color="#6fa6d6"/></linearGradient><linearGradient id="gBlueH" x1="0" y1="0" x2="1" y2="0"><stop offset="0" stop-color="#6fa6d6"/><stop offset="1" stop-color="#d4e9f9"/></linearGradient><linearGradient id="gDoc" x1="0" y1="0" x2="1" y2="1"><stop offset="0" stop-color="#ffffff"/><stop offset="1" stop-color="#d0d0d0"/></linearGradient><linearGradient id="gGold" x1="0" y1="0" x2="0" y2="1"><stop offset="0" stop-color="#fff4a8"/><stop offset="1" stop-color="#e8b820"/></linearGradient><linearGradient id="gFloppy" x1="0" y1="0" x2="1" y2="1"><stop offset="0" stop-color="#9a9a9a"/><stop offset="1" stop-color="#4a4a4a"/></linearGradient><radialGradient id="gPlay" cx="0.3" cy="0.3" r="0.9"><stop offset="0" stop-color="#ffffff"/><stop offset="0.35" stop-color="#c6e886"/><stop offset="0.7" stop-color="#8cc63f"/><stop offset="1" stop-color="#6aa82e"/></radialGradient><linearGradient id="gStop" x1="0" y1="0" x2="0" y2="1"><stop offset="0" stop-color="#f8f8f8"/><stop offset="1" stop-color="#e2e2e2"/></linearGradient><radialGradient id="gRec" cx="0.4" cy="0.3" r="0.9"><stop offset="0" stop-color="#ffffff"/><stop offset="0.6" stop-color="#f0f0f0"/><stop offset="1" stop-color="#b8b8b8"/></radialGradient><linearGradient id="gRed" x1="0" y1="0" x2="0" y2="1"><stop offset="0" stop-color="#7a0000"/><stop offset="1" stop-color="#e01818"/></linearGradient><linearGradient id="gGear" x1="0" y1="0" x2="0" y2="1"><stop offset="0" stop-color="#7a7a7a"/><stop offset="1" stop-color="#c4c4c4"/></linearGradient><linearGradient id="gKb" x1="0" y1="0" x2="0" y2="1"><stop offset="0" stop-color="#a8d0f8"/><stop offset="1" stop-color="#dceeff"/></linearGradient><linearGradient id="gBtn" x1="0" y1="0" x2="0" y2="1"><stop offset="0" stop-color="#c9dbf0"/><stop offset="0.48" stop-color="#bcd2ec"/><stop offset="0.5" stop-color="#9dbadb"/><stop offset="1" stop-color="#b4cde9"/></linearGradient><linearGradient id="gClose" x1="0" y1="0" x2="0" y2="1"><stop offset="0" stop-color="#eab0a2"/><stop offset="0.48" stop-color="#d9806c"/><stop offset="0.5" stop-color="#c13e22"/><stop offset="1" stop-color="#dc8472"/></linearGradient><linearGradient id="gOrange" x1="0" y1="0" x2="0" y2="1"><stop offset="0" stop-color="#f07a3c"/><stop offset="1" stop-color="#d8440c"/></linearGradient><linearGradient id="gLibBlue" x1="0" y1="0" x2="0" y2="1"><stop offset="0" stop-color="#3aa0e0"/><stop offset="1" stop-color="#0a62a8"/></linearGradient></defs>
<path d="M42.9,70 h7.2 l-3.6,4.2z" fill="#1a1a1a"/>
<path d="M248.9,70 h7.2 l-3.6,4.2z" fill="#1a1a1a"/>
<path d="M456.9,70 h7.2 l-3.6,4.2z" fill="#1a1a1a"/>
<path d="M777.9,70 h7.2 l-3.6,4.2z" fill="#1a1a1a"/>
<path d="M824.9,70 h7.2 l-3.6,4.2z" fill="#1a1a1a"/>
<path d="M718.9,70 h7.2 l-3.6,4.2z" fill="#1a1a1a"/>
<path d="M10,14.5 H13 M19.5,14.5 H22.8 V19" fill="none" stroke="#4a4a4a" stroke-width="1"/>
<path d="M12.6,10.6 L19.8,14.5 L12.6,18.4Z" fill="#5fb4e6" stroke="#1a6aa8" stroke-width="1" stroke-linejoin="round"/>
<rect x="19.5" y="19.3" width="6.2" height="6.2" fill="url(#gOrange)" stroke="#a8320a" stroke-width="0.9"/>
<rect x="1225.5" y="10.5" width="30" height="16" rx="2.5" ry="2.5" fill="url(#gBtn)" stroke="#56729a" stroke-width="1"/>
<rect x="1226.5" y="11.5" width="28" height="14" rx="2" ry="2" fill="none" stroke="#fff" stroke-opacity="0.55" stroke-width="1"/>
<rect x="1258.5" y="10.5" width="30" height="16" rx="2.5" ry="2.5" fill="url(#gBtn)" stroke="#56729a" stroke-width="1"/>
<rect x="1259.5" y="11.5" width="28" height="14" rx="2" ry="2" fill="none" stroke="#fff" stroke-opacity="0.55" stroke-width="1"/>
<rect x="1291.5" y="10.5" width="30" height="16" rx="2.5" ry="2.5" fill="url(#gClose)" stroke="#541c20" stroke-width="1"/>
<rect x="1292.5" y="11.5" width="28" height="14" rx="2" ry="2" fill="none" stroke="#fff" stroke-opacity="0.55" stroke-width="1"/>
<rect x="1235.5" y="18.5" width="10" height="4" rx="1" fill="#f2f2f2" stroke="#48566c" stroke-width="1"/>
<rect x="1268.7" y="14.7" width="10" height="8" rx="1" fill="#f2f2f2" stroke="#48566c" stroke-width="1"/>
<rect x="1271.6" y="17.6" width="4.2" height="2.2" fill="#8aa8cc" stroke="#48566c" stroke-width="0.8"/>
<path d="M1301.3,14.4 h3.7 l1.5,2 l1.5,-2 h3.7 l-3.4,4.1 l3.4,4.1 h-3.7 l-1.5,-2 l-1.5,2 h-3.7 l3.4,-4.1z" fill="#f8f8f8" stroke="#4e5670" stroke-width="1" stroke-linejoin="round"/>
<rect x="15.5" y="62.5" width="16" height="16" fill="url(#gDoc)" stroke="#8c8c8c" stroke-width="1"/>
<path d="M17.2,68.3 H19.5 M25,68.3 H28 V71.5" fill="none" stroke="#333" stroke-width="1"/>
<path d="M19.4,64.6 L25,68.3 L19.4,72Z" fill="#3f9fe0" stroke="#1668a8" stroke-width="0.8" stroke-linejoin="round"/>
<rect x="24.4" y="72" width="3.4" height="3.4" fill="#e0482a"/>
<path d="M27.5,71.5 h4 v3.2 h3.3 v4 h-3.3 v3.2 h-4 v-3.2 h-3.3 v-4 h3.3z" fill="url(#gGold)" stroke="#94700e" stroke-width="0.9" stroke-linejoin="round"/>
<path d="M59.5,63.5 H77 V81.5 H61 L59.5,80Z" fill="url(#gFloppy)" stroke="#3c3c3c" stroke-width="0.8"/>
<rect x="61.8" y="65.3" width="13" height="5.7" fill="#fff" stroke="#2a2a2a" stroke-width="0.6"/>
<path d="M62.6,67 H74 M62.6,69.4 H74" stroke="#000" stroke-width="1.2"/>
<rect x="63" y="75" width="10.2" height="6.3" fill="#ececec"/>
<rect x="64.2" y="76" width="2" height="5.2" fill="#3a3a3a"/>
<path d="M94.5,72 L103.7,64.6 V68.4 H111.8 V75.6 H103.7 V79.4Z" fill="url(#gBlue)" stroke="#2f557f" stroke-width="1" stroke-linejoin="round"/>
<path d="M142.5,72 L133.6,64.6 V68.4 H125.4 V75.6 H133.6 V79.4Z" fill="#e0e0e0" stroke="#c6c6c6" stroke-width="1" stroke-linejoin="round"/>
<path d="M165,63.4 L172.6,72.3 H168.7 V80.6 H161.4 V72.3 H157.4Z" fill="url(#gBlue)" stroke="#2f557f" stroke-width="1" stroke-linejoin="round"/>
<rect x="189.5" y="61.5" width="9" height="9" fill="url(#gDoc)" stroke="#8a8a8a" stroke-width="1"/>
<path d="M192.5,62 V67 M195.3,62 V65 M190.5,69.5 L198,64.5" stroke="#8a8a8a" stroke-width="1" fill="none"/>
<rect x="201.5" y="61.5" width="9.3" height="9" fill="url(#gLibBlue)" stroke="#0a5a9a" stroke-width="1"/>
<path d="M203,66 q1.5,-3.4 3,0 t3,0" stroke="#0a3a6a" stroke-width="1" fill="none"/>
<rect x="189.5" y="73.5" width="9" height="9" fill="url(#gOrange)" stroke="#b43c0a" stroke-width="1"/>
<rect x="192.5" y="76.5" width="3" height="3" fill="none" stroke="#a02c00" stroke-width="1"/>
<rect x="201.5" y="73.5" width="9.3" height="9" fill="url(#gDoc)" stroke="#1c1c1c" stroke-width="1"/>
<path d="M203,79.8 H206 V76.6 H209.5" stroke="#555" stroke-width="1" fill="none"/>
<path d="M229.25,64.71 L229.47,62.32 L232.53,62.32 L232.75,64.71 L234.92,65.61 L236.76,64.07 L238.93,66.24 L237.39,68.08 L238.29,70.25 L240.68,70.47 L240.68,73.53 L238.29,73.75 L237.39,75.92 L238.93,77.76 L236.76,79.93 L234.92,78.39 L232.75,79.29 L232.53,81.68 L229.47,81.68 L229.25,79.29 L227.08,78.39 L225.24,79.93 L223.07,77.76 L224.61,75.92 L223.71,73.75 L221.32,73.53 L221.32,70.47 L223.71,70.25 L224.61,68.08 L223.07,66.24 L225.24,64.07 L227.08,65.61Z" fill="url(#gGear)" stroke="#3c3c3c" stroke-width="0.9" stroke-linejoin="round"/>
<circle cx="231" cy="72" r="5.2" fill="#9a9a9a" stroke="#3a3a3a" stroke-width="2"/>
<circle cx="231" cy="72" r="2.4" fill="#fff" stroke="#606060" stroke-width="0.8"/>
<rect x="264.5" y="63.5" width="19.3" height="17" fill="url(#gDoc)" stroke="#2c2c2c" stroke-width="0.9"/>
<rect x="265" y="64" width="18.3" height="3" fill="#a8d0f4"/>
<path d="M267,69.6 h4 m1.5,0 h4 m1.5,0 h4 M267,77.4 h4 m1.5,0 h4 m1.5,0 h4" stroke="#111" stroke-width="1.1" fill="none"/>
<rect x="266" y="72" width="16.3" height="3.2" rx="1" fill="#1a4e90"/>
<path d="M267.3,73.6 h3.6 m1.8,0 h3.6 m1.8,0 h3.6" stroke="#e8f0ff" stroke-width="1" fill="none"/>
<path d="M301.5,72 L310.8,64.6 V79.2Z" fill="url(#gBlueH)" stroke="#3a6a9c" stroke-width="0.9" stroke-linejoin="round"/>
<rect x="313.3" y="64.4" width="3.4" height="11.5" fill="url(#gBlue)" stroke="#2f557f" stroke-width="0.9"/>
<path d="M314.11,74.10 L314.19,72.66 L315.81,72.66 L315.89,74.10 L316.99,74.56 L318.06,73.59 L319.21,74.74 L318.24,75.81 L318.70,76.91 L320.14,76.99 L320.14,78.61 L318.70,78.69 L318.24,79.79 L319.21,80.86 L318.06,82.01 L316.99,81.04 L315.89,81.50 L315.81,82.94 L314.19,82.94 L314.11,81.50 L313.01,81.04 L311.94,82.01 L310.79,80.86 L311.76,79.79 L311.30,78.69 L309.86,78.61 L309.86,76.99 L311.30,76.91 L311.76,75.81 L310.79,74.74 L311.94,73.59 L313.01,74.56Z" fill="#8a8a8a" stroke="#3a3a3a" stroke-width="0.8"/>
<circle cx="315" cy="77.8" r="1.5" fill="#1c1c1c"/>
<circle cx="340.1" cy="71.8" r="10.6" fill="url(#gPlay)" stroke="#4a9636" stroke-width="1.1"/>
<path d="M336.9,67 L344.8,71.9 L336.9,76.8Z" fill="#1a1a1a"/>
<rect x="363.4" y="64.4" width="3.4" height="15" fill="url(#gBlue)" stroke="#20456f" stroke-width="0.9"/>
<path d="M369.5,64.4 L378.8,72 L369.5,79.5Z" fill="url(#gBlue)" stroke="#2a507c" stroke-width="0.9" stroke-linejoin="round"/>
<circle cx="402" cy="71.8" r="10.5" fill="url(#gStop)" stroke="#d4d4d4" stroke-width="1"/>
<rect x="398.3" y="68.2" width="7.5" height="7.5" fill="#b4b4b4"/>
<circle cx="439" cy="72" r="8.7" fill="url(#gRec)" stroke="#7c7c7c" stroke-width="1"/>
<circle cx="439" cy="72" r="3.9" fill="url(#gRed)"/>
<circle cx="760" cy="71.8" r="8.8" fill="url(#gRec)" stroke="#5c8c2c" stroke-width="1.2"/>
<path d="M755.6,73.6 L759.2,76.2 L764.3,68.8" fill="none" stroke="#6ea428" stroke-width="2.1"/>
<rect x="797.5" y="70.6" width="19" height="10.8" rx="2" fill="url(#gKb)" stroke="#1e5c9c" stroke-width="1.1"/>
<rect x="799.9" y="73.19999999999999" width="1.8" height="1.8" fill="#0a2a5c"/>
<rect x="799.9" y="77.19999999999999" width="1.8" height="1.8" fill="#0a2a5c"/>
<rect x="804.0" y="73.19999999999999" width="1.8" height="1.8" fill="#0a2a5c"/>
<rect x="804.0" y="77.19999999999999" width="1.8" height="1.8" fill="#0a2a5c"/>
<rect x="808.0" y="73.19999999999999" width="1.8" height="1.8" fill="#0a2a5c"/>
<rect x="808.0" y="77.19999999999999" width="1.8" height="1.8" fill="#0a2a5c"/>
<rect x="812.1" y="73.19999999999999" width="1.8" height="1.8" fill="#0a2a5c"/>
<rect x="812.1" y="77.19999999999999" width="1.8" height="1.8" fill="#0a2a5c"/>
<path d="M800.4,62 v1 M800.4,64 v3" stroke="#0f4a85" stroke-width="1"/><path d="M798.1999999999999,66 h4.4 l-2.2,2.8z" fill="#0f4a85"/>
<path d="M806.4,62 v1 M806.4,64 v3" stroke="#0f4a85" stroke-width="1"/><path d="M804.1999999999999,66 h4.4 l-2.2,2.8z" fill="#0f4a85"/>
<path d="M812.5,62 v1 M812.5,64 v3" stroke="#0f4a85" stroke-width="1"/><path d="M810.3,66 h4.4 l-2.2,2.8z" fill="#0f4a85"/>
<rect x="43.5" y="121.5" width="15" height="15" fill="url(#gDoc)" stroke="#707070" stroke-width="1"/>
<path d="M45,126.7 H46.5 M51.5,126.7 H54 V129" fill="none" stroke="#444" stroke-width="0.9"/>
<path d="M46.4,123.6 L52,126.7 L46.4,129.8Z" fill="#4aa8e4" stroke="#1a6aa8" stroke-width="0.8" stroke-linejoin="round"/>
<rect x="51.3" y="129.2" width="4.6" height="4.6" fill="url(#gOrange)" stroke="#a8320a" stroke-width="0.8"/>
<path d="M110,124 L115,128.5 L110,133Z" fill="#000"/>
<rect x="121.5" y="121.5" width="15" height="15" fill="url(#gDoc)" stroke="#707070" stroke-width="1"/>
<path d="M123,127.5 H124.5 M129.3,127.5 H131.5 V130" fill="none" stroke="#111" stroke-width="1"/>
<path d="M124.4,124.3 L129.4,127.5 L124.4,130.7Z" fill="none" stroke="#111" stroke-width="1.1" stroke-linejoin="round"/>
<rect x="129.6" y="130.4" width="4" height="3.2" fill="none" stroke="#111" stroke-width="1.1"/>
<path d="M231,124 L236,128.5 L231,133Z" fill="#000"/>
<path d="M1308.5,126 h9 l-4.5,5z" fill="#000"/>
<circle cx="24" cy="129" r="4.7" fill="#f4f4f4" stroke="#5a5a5a" stroke-width="1"/>
<path d="M21.3,129 L24.2,126.6 V128.2 H26.8 V129.8 H24.2 V131.4Z" fill="#3c3c3c"/>
<path d="M14,147.5 H33" stroke="#a8a8a8" stroke-width="1"/>
<rect x="16.5" y="159.5" width="15" height="15" fill="none" stroke="#8c8c8c" stroke-width="1" stroke-dasharray="2 1.5"/>
<circle cx="23.3" cy="166.4" r="4.6" fill="#f8f8f8" stroke="#3a3a3a" stroke-width="1.2"/>
<path d="M21,166.4 h4.6 M23.3,164.1 v4.6" stroke="#111" stroke-width="1.1"/><path d="M26.8,169.9 L31,174" stroke="#3a3a3a" stroke-width="1.8"/>
<rect x="16.5" y="188.5" width="15" height="13" fill="url(#gDoc)" stroke="#3a3a3a" stroke-width="1"/>
<path d="M18.5,192.5 v-2 h2 M18.8,190.8 l2.4,2.2 M29.5,192.5 v-2 h-2 M29.2,190.8 l-2.4,2.2 M18.5,197.5 v2 h2 M18.8,199.2 l2.4,-2.2 M29.5,197.5 v2 h-2 M29.2,199.2 l-2.4,-2.2" stroke="#2a2a2a" stroke-width="0.9" fill="none"/>
<path d="M17,220.5 H30 M17,225.7 H30 M27,218.3 l3.6,2.2 l-3.6,2.2 M27,223.5 l3.6,2.2 l-3.6,2.2" stroke="#3a3a3a" stroke-width="1" fill="none"/>
<rect x="17.5" y="245.5" width="13" height="11" fill="url(#gDoc)" stroke="#3a3a3a" stroke-width="1"/>
<text x="18.8" y="254.6" font-size="9" font-weight="bold" fill="#000">A</text>
<path d="M25.6,248.7 h3.6 M25.6,251 h3.6 M25.6,253.3 h3.6" stroke="#111" stroke-width="1"/>
<path d="M19.3,722.3 l4.2,4.4 l-4.2,4.4 M24.5,722.3 l4.2,4.4 l-4.2,4.4" stroke="#4a4a4a" stroke-width="1.5" fill="none"/>
<rect x="1319.8" y="757.8" width="1.5" height="1.5" fill="#bdbdbd"/>
<rect x="1316.7" y="757.8" width="1.5" height="1.5" fill="#bdbdbd"/>
<rect x="1313.5" y="757.8" width="1.5" height="1.5" fill="#bdbdbd"/>
<rect x="1319.8" y="754.7" width="1.5" height="1.5" fill="#bdbdbd"/>
<rect x="1316.7" y="754.7" width="1.5" height="1.5" fill="#bdbdbd"/>
<rect x="1319.8" y="751.5" width="1.5" height="1.5" fill="#bdbdbd"/>
</svg>
</body></html>
